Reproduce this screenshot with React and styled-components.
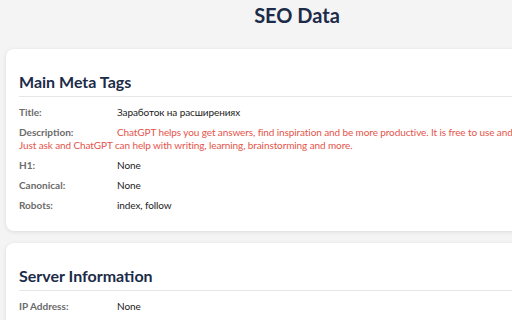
import React from 'react'
import styled, { createGlobalStyle } from 'styled-components'

const GlobalStyle = createGlobalStyle`
  html, body {
    margin: 0;
    padding: 0;
    background: #f4f4f4;
    overflow: hidden;
  }
  body {
    font-family: Lato, "Open Sans", sans-serif;
  }
`

const Page = styled.div`
  width: 582px;
  padding: 0 6px;
`

const Title = styled.h1`
  margin: 0 0 20px;
  padding-top: 1px;
  font-size: 20px;
  line-height: 28px;
  font-weight: 700;
  text-align: center;
  color: #1c2b48;
`

const Card = styled.section`
  background: #fff;
  border-radius: 8px;
  box-shadow: 0 1px 4px rgba(0, 0, 0, 0.1);
  padding: 22px 12px 12px 13px;
  margin-bottom: 12px;
`

const CardHeading = styled.h2`
  margin: 0 0 9px;
  padding-bottom: 3px;
  font-size: 16px;
  line-height: 22px;
  font-weight: 700;
  color: #1c2b48;
  border-bottom: 1px solid #e6e6e6;
`

const Row = styled.p`
  margin: 0 0 7px;
  font-size: 10px;
  line-height: 13px;
  letter-spacing: -0.1px;
  color: ${p => (p.$accent ? '#e5534b' : '#222')};
`

const Label = styled.strong`
  display: inline-block;
  width: 98px;
  font-weight: 700;
  letter-spacing: 0;
  color: #6b6b6b;
`

const meta = [
  { label: 'Title:', value: 'Заработок на расширениях' },
  {
    label: 'Description:',
    value:
      'ChatGPT helps you get answers, find inspiration and be more productive. It is free to use and easy to try. Just ask and ChatGPT can help with writing, learning, brainstorming and more.',
    accent: true,
  },
  { label: 'H1:', value: 'None' },
  { label: 'Canonical:', value: 'None' },
  { label: 'Robots:', value: 'index, follow' },
]

const server = [{ label: 'IP Address:', value: 'None' }]

function Section({ title, rows }) {
  return (
    <Card>
      <CardHeading>{title}</CardHeading>
      {rows.map(r => (
        <Row key={r.label} $accent={r.accent}>
          <Label>{r.label}</Label>
          {r.value}
        </Row>
      ))}
    </Card>
  )
}

export default function App() {
  return (
    <Page>
      <GlobalStyle />
      <Title>SEO Data</Title>
      <Section title="Main Meta Tags" rows={meta} />
      <Section title="Server Information" rows={server} />
    </Page>
  )
}
